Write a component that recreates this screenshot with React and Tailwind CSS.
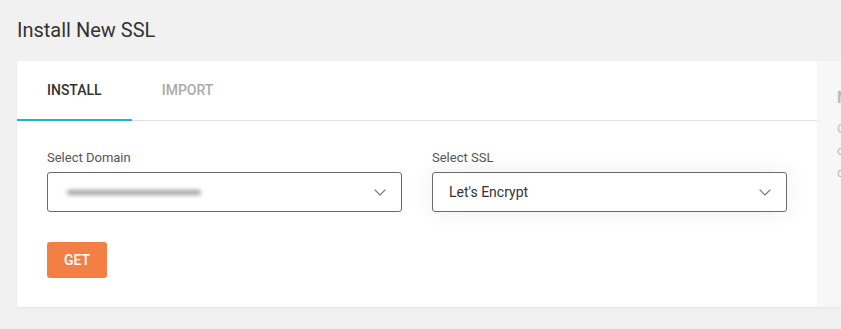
import React from "react";

const Chevron = () => (
  <svg width="12" height="7" viewBox="0 0 12 7" fill="none">
    <path d="M1 1l5 5 5-5" stroke="#777" strokeWidth="1.1" strokeLinecap="round" strokeLinejoin="round" />
  </svg>
);

const SelectBox = ({ label, children, className = "" }) => (
  <div className="flex-1">
    <div className="text-[13px] leading-4 text-[#555] mb-[6px]">{label}</div>
    <div
      className={`h-[40px] border border-[#6b6b6b] rounded-[3px] flex items-center justify-between pl-[16px] pr-[15px] bg-white ${className}`}
    >
      <div className="text-[14px] text-[#333]">{children}</div>
      <Chevron />
    </div>
  </div>
);

export default function App() {
  return (
    <div
      className="w-[841px] h-[329px] bg-[#f1f1f1] overflow-hidden pl-[17px]"
      style={{ fontFamily: "Roboto, 'Liberation Sans', sans-serif" }}
    >
      <h1 className="pt-[16px] text-[20px] leading-7 text-[#333] font-normal">Install New SSL</h1>

      <div className="mt-[17px] flex w-[1200px] shadow-[0_1px_3px_rgba(0,0,0,0.06)] rounded-[3px]">
        <div className="w-[800px] shrink-0 bg-white rounded-l-[3px]">
          <div className="h-[60px] flex border-b border-[#e0e0e0]">
            <div className="px-[30px] flex items-center border-b-2 border-[#21b3d6] -mb-px text-[14px] font-medium text-[#333]">
              INSTALL
            </div>
            <div className="px-[30px] flex items-center text-[14px] font-medium text-[#aaa]">
              IMPORT
            </div>
          </div>

          <div className="px-[30px] pt-[29px] pb-[29px]">
            <div className="flex gap-[30px]">
              <SelectBox label="Select Domain">
                <div className="w-[134px] h-[5px] ml-[3px] bg-[#a0a0a0] rounded-full blur-[2px]" />
              </SelectBox>
              <SelectBox label="Select SSL" className="shadow-[0_0_24px_rgba(0,0,0,0.07)]">
                Let's Encrypt
              </SelectBox>
            </div>
            <button className="mt-[30px] w-[60px] h-[36px] bg-[#f47f45] rounded-[3px] text-white text-[14px] font-medium">
              GET
            </button>
          </div>
        </div>

        <div className="flex-1 bg-[#f7f7f7] px-[20px] pt-[27px] text-[#bbb]">
          <div className="text-[16px] font-bold leading-5 mb-[10px]">Note</div>
          <div className="text-[13px] leading-[22px]">
            <p>Certificates are issued automatically</p>
            <p>covering the selected domain and</p>
            <p>can be renewed at any time.</p>
          </div>
        </div>
      </div>
    </div>
  );
}
